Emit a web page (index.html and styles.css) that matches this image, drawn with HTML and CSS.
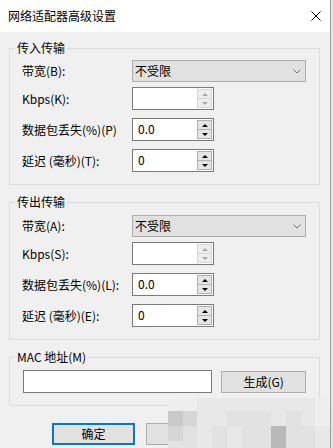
FILE: index.html
```html
<!DOCTYPE html>
<html lang="zh-CN">
<head>
<meta charset="utf-8">
<title>网络适配器高级设置</title>
<link rel="stylesheet" href="styles.css">
</head>
<body>
<div class="window">
  <div class="titlebar">
    <span class="title">网络适配器高级设置</span>
    <svg class="close" width="10" height="10" viewBox="0 0 10 10"><path d="M0.5 0.5 L9.5 9.5 M9.5 0.5 L0.5 9.5" stroke="#000" stroke-width="1" fill="none"/></svg>
  </div>
  <div class="content">
    <fieldset class="group">
      <legend>传入传输</legend>
      <div class="rows rows-first">
        <div class="row row-combo">
          <span class="label">带宽(B):</span>
          <div class="combo"><span>不受限</span><svg class="chev" width="8" height="5" viewBox="0 0 8 5"><path d="M0.5 0.5 L4 4 L7.5 0.5" stroke="#707070" stroke-width="1" fill="none"/></svg></div>
        </div>
        <div class="row">
          <span class="label">Kbps(K):</span>
          <div class="spin disabled"><div class="field"></div><div class="spinbtns"><div class="sb up"></div><div class="sb down"></div></div></div>
        </div>
        <div class="row">
          <span class="label">数据包丢失(%)(P)</span>
          <div class="spin"><div class="field">0.0</div><div class="spinbtns"><div class="sb up"></div><div class="sb down"></div></div></div>
        </div>
        <div class="row">
          <span class="label">延迟 (毫秒)(T):</span>
          <div class="spin"><div class="field">0</div><div class="spinbtns"><div class="sb up"></div><div class="sb down"></div></div></div>
        </div>
      </div>
    </fieldset>
    <fieldset class="group group-next">
      <legend>传出传输</legend>
      <div class="rows">
        <div class="row row-combo">
          <span class="label">带宽(A):</span>
          <div class="combo"><span>不受限</span><svg class="chev" width="8" height="5" viewBox="0 0 8 5"><path d="M0.5 0.5 L4 4 L7.5 0.5" stroke="#707070" stroke-width="1" fill="none"/></svg></div>
        </div>
        <div class="row">
          <span class="label">Kbps(S):</span>
          <div class="spin disabled"><div class="field"></div><div class="spinbtns"><div class="sb up"></div><div class="sb down"></div></div></div>
        </div>
        <div class="row">
          <span class="label">数据包丢失(%)(L):</span>
          <div class="spin"><div class="field">0.0</div><div class="spinbtns"><div class="sb up"></div><div class="sb down"></div></div></div>
        </div>
        <div class="row">
          <span class="label">延迟 (毫秒)(E):</span>
          <div class="spin"><div class="field">0</div><div class="spinbtns"><div class="sb up"></div><div class="sb down"></div></div></div>
        </div>
      </div>
    </fieldset>
    <fieldset class="group group-next">
      <legend>MAC 地址(M)</legend>
      <div class="rows mac-rows">
        <div class="mac-row">
          <div class="textbox"></div>
          <button class="btn gen">生成(G)</button>
        </div>
      </div>
    </fieldset>
    <div class="buttons">
      <button class="btn default">确定</button>
      <button class="btn">取消</button>
      <button class="btn">应用</button>
    </div>
  </div>
  <div class="mosaic">
    <i class="a"></i><i class="a"></i><i class="b"></i><i class="b"></i><i class="b"></i><i class="b"></i><i class="b"></i><i class="b"></i><i class="b"></i><i class="b"></i><i class="a"></i>
    <i class="e"></i><i class="d"></i><i class="b"></i><i class="b"></i><i class="c"></i><i class="c"></i><i class="c"></i><i class="b"></i><i class="c"></i><i class="b"></i><i class="a"></i>
    <i class="d"></i><i class="c"></i><i class="b"></i><i class="c"></i><i class="b"></i><i class="c"></i><i class="c"></i><i class="f"></i><i class="c"></i><i class="c"></i><i class="b"></i>
    <i class="c"></i><i class="c"></i><i class="b"></i><i class="c"></i><i class="b"></i><i class="c"></i><i class="c"></i><i class="f"></i><i class="c"></i><i class="c"></i><i class="b"></i>
  </div>
</div>
</body>
</html>
```
FILE: styles.css
```css
* { box-sizing: border-box; }

html, body {
  margin: 0;
  padding: 0;
}

body {
  font-family: "Noto Sans CJK SC", "Microsoft YaHei", sans-serif;
  font-size: 12px;
  color: #000;
  background: #e6e6e6;
}

.window {
  position: relative;
  width: 331px;
  height: 448px;
  overflow: hidden;
  background: #f0f0f0;
  border-right: 1px solid #9c9c9c;
}

.titlebar {
  height: 32px;
  background: #fff;
  display: flex;
  align-items: center;
  justify-content: space-between;
  padding: 0 9px 1px 8px;
}

.title {
  font-size: 12px;
  line-height: 16px;
}

.close {
  display: block;
}

.content {
  display: flex;
  flex-direction: column;
}

.group {
  margin: 8px 10px 0 9px;
  padding: 0;
  border: 1px solid #dcdcdc;
  min-width: 0;
}

.group-next {
  margin-top: 9px;
}

.group legend {
  margin-left: 5px;
  padding: 0 2px;
  font-size: 12px;
  line-height: 16px;
}

.rows {
  display: flex;
  flex-direction: column;
  padding: 5px 13px 12px 12px;
}

.rows-first {
  padding-top: 4px;
}

.row {
  display: flex;
  align-items: center;
  height: 23px;
  margin-top: 8px;
}

.row-combo {
  height: 22px;
  margin-top: 0;
  margin-bottom: -3px;
}

.label {
  width: 110px;
  flex: none;
  line-height: 16px;
  white-space: nowrap;
}

.combo {
  width: 175px;
  height: 22px;
  background: #e1e1e1;
  border: 1px solid #adadad;
  display: flex;
  align-items: center;
  justify-content: space-between;
  padding: 0 4px 0 2px;
  line-height: 16px;
}

.chev {
  display: block;
}

.spin {
  width: 82px;
  height: 23px;
  border: 1px solid #7a7a7a;
  background: #fff;
  display: flex;
}

.field {
  flex: 1;
  padding-left: 5px;
  line-height: 20px;
}

.spinbtns {
  width: 16px;
  display: flex;
  flex-direction: column;
  padding: 1px 1px 1px 0;
}

.sb {
  flex: 1;
  background: #e5e5e5;
  border: 1px solid #b0b0b0;
  display: flex;
  align-items: center;
  justify-content: center;
}

.sb.down {
  border-top: none;
}

.sb.up::after,
.sb.down::after {
  content: "";
  width: 0;
  height: 0;
  border-left: 3px solid transparent;
  border-right: 3px solid transparent;
}

.sb.up::after {
  border-bottom: 3px solid #000;
}

.sb.down::after {
  border-top: 3px solid #000;
}

.spin.disabled .sb {
  background: #eeeeee;
  border-color: #d6d6d6;
}

.spin.disabled .sb.up::after {
  border-bottom-color: #a8a8a8;
}

.spin.disabled .sb.down::after {
  border-top-color: #a8a8a8;
}

.mac-rows {
  padding-left: 13px;
}

.mac-row {
  display: flex;
  align-items: flex-start;
}

.textbox {
  width: 190px;
  height: 23px;
  background: #fff;
  border: 1px solid #7a7a7a;
}

.btn {
  font-family: inherit;
  font-size: 12px;
  line-height: 16px;
  color: #000;
  background: #e1e1e1;
  border: 1px solid #adadad;
  height: 22px;
  width: 83px;
  padding: 0;
  margin: 0;
}

.gen {
  width: 85px;
  margin-left: 9px;
  margin-top: 1px;
}

.buttons {
  display: flex;
  gap: 11px;
  margin: 17px 0 0 52px;
}

.btn.default {
  border: 2px solid #0078d7;
}

.mosaic {
  position: absolute;
  left: 168px;
  top: 398px;
  width: 162px;
  height: 50px;
  display: grid;
  grid-template-columns: repeat(11, 1fr);
  grid-template-rows: 13px 15px 15px 7px;
  border-top-left-radius: 12px;
  border-top-right-radius: 8px;
  overflow: hidden;
}

.mosaic i { display: block; }
.mosaic .a { background: #eeeeee; }
.mosaic .b { background: #e8e8e8; }
.mosaic .c { background: #e2e2e2; }
.mosaic .d { background: #d6d6d6; }
.mosaic .e { background: #c9c9c9; }
.mosaic .f { background: #b9b9b9; }
```
